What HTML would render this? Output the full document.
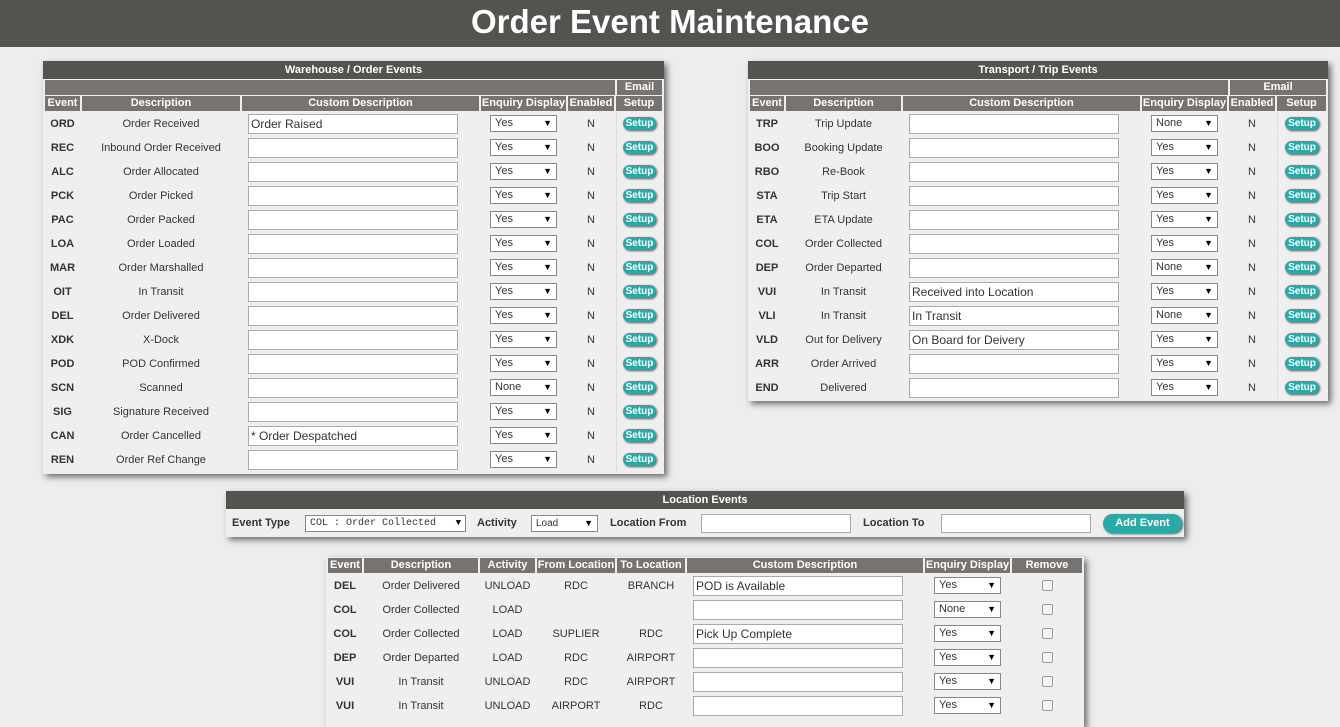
<!DOCTYPE html>
<html><head><meta charset="utf-8"><style>
*{box-sizing:border-box;margin:0;padding:0}
body{width:1340px;height:717px;overflow:hidden;background:#ededed;font-family:"Liberation Sans",Arial,sans-serif;font-size:11px;color:#333;position:relative}
.hdr{position:absolute;left:0;top:0;width:1340px;height:47px;background:#555350;color:#fff;font-weight:bold;font-size:33px;text-align:center;line-height:44px}
.panel{position:absolute;background:#efefef;box-shadow:3px 3px 6px rgba(0,0,0,.55);overflow:hidden}
.ttl{background:#555350;color:#fff;font-weight:bold;text-align:center;height:18px;line-height:18px;font-size:11px}
table{border-collapse:separate;border-spacing:2px 1px;table-layout:fixed;width:100%}
th{background:#767370;color:#fff;font-weight:bold;height:15px;line-height:15px;font-size:11px;padding:0;white-space:nowrap;overflow:hidden}
td{height:23px;text-align:center;padding:0;font-size:11px;color:#333}
td.c{font-weight:bold;color:#333}
td.l{text-align:left;padding-left:6px}
td.s{border-left:1px solid #ddd}
.in{display:inline-block;width:210px;height:20px;border:1px solid #aaa;background:#fff;text-align:left;font-size:12px;line-height:18px;padding-left:2px;vertical-align:middle;color:#333}
.sel{display:inline-block;width:67px;height:17px;border:1px solid #888;background:#fff;text-align:left;font-size:11px;line-height:15px;padding-left:4px;position:relative;vertical-align:middle}
.sel:after{content:"▼";position:absolute;right:4px;top:0;font-size:9px;color:#000}
.btn{display:inline-block;background:#2aa9a6;color:#fff;font-weight:bold;border-radius:8px;box-shadow:1px 1px 2px #555;font-size:10px;height:13px;line-height:13px;padding:0 3px;vertical-align:middle}
.cb{display:inline-block;width:11px;height:11px;border:1px solid #999;border-radius:2px;background:#f4f4f4;vertical-align:middle}
</style></head><body>
<div class="hdr">Order Event Maintenance</div>

<div class="panel" style="left:43px;top:61px;width:621px;height:413px">
<div class="ttl">Warehouse / Order Events</div>
<table>
<colgroup><col style="width:570px"><col></colgroup>
<tr><th></th><th>Email</th></tr>
</table>
<table style="margin-top:-1px">
<colgroup><col style="width:35px"><col style="width:158px"><col style="width:237px"><col style="width:85px"><col style="width:46px"><col></colgroup>
<tr><th>Event</th><th>Description</th><th>Custom Description</th><th>Enquiry Display</th><th>Enabled</th><th>Setup</th></tr>
<tr><td class="c">ORD</td><td>Order Received</td><td class="l"><span class="in">Order Raised</span></td><td><span class="sel">Yes</span></td><td>N</td><td class="s"><span class="btn">Setup</span></td></tr>
<tr><td class="c">REC</td><td>Inbound Order Received</td><td class="l"><span class="in"></span></td><td><span class="sel">Yes</span></td><td>N</td><td class="s"><span class="btn">Setup</span></td></tr>
<tr><td class="c">ALC</td><td>Order Allocated</td><td class="l"><span class="in"></span></td><td><span class="sel">Yes</span></td><td>N</td><td class="s"><span class="btn">Setup</span></td></tr>
<tr><td class="c">PCK</td><td>Order Picked</td><td class="l"><span class="in"></span></td><td><span class="sel">Yes</span></td><td>N</td><td class="s"><span class="btn">Setup</span></td></tr>
<tr><td class="c">PAC</td><td>Order Packed</td><td class="l"><span class="in"></span></td><td><span class="sel">Yes</span></td><td>N</td><td class="s"><span class="btn">Setup</span></td></tr>
<tr><td class="c">LOA</td><td>Order Loaded</td><td class="l"><span class="in"></span></td><td><span class="sel">Yes</span></td><td>N</td><td class="s"><span class="btn">Setup</span></td></tr>
<tr><td class="c">MAR</td><td>Order Marshalled</td><td class="l"><span class="in"></span></td><td><span class="sel">Yes</span></td><td>N</td><td class="s"><span class="btn">Setup</span></td></tr>
<tr><td class="c">OIT</td><td>In Transit</td><td class="l"><span class="in"></span></td><td><span class="sel">Yes</span></td><td>N</td><td class="s"><span class="btn">Setup</span></td></tr>
<tr><td class="c">DEL</td><td>Order Delivered</td><td class="l"><span class="in"></span></td><td><span class="sel">Yes</span></td><td>N</td><td class="s"><span class="btn">Setup</span></td></tr>
<tr><td class="c">XDK</td><td>X-Dock</td><td class="l"><span class="in"></span></td><td><span class="sel">Yes</span></td><td>N</td><td class="s"><span class="btn">Setup</span></td></tr>
<tr><td class="c">POD</td><td>POD Confirmed</td><td class="l"><span class="in"></span></td><td><span class="sel">Yes</span></td><td>N</td><td class="s"><span class="btn">Setup</span></td></tr>
<tr><td class="c">SCN</td><td>Scanned</td><td class="l"><span class="in"></span></td><td><span class="sel">None</span></td><td>N</td><td class="s"><span class="btn">Setup</span></td></tr>
<tr><td class="c">SIG</td><td>Signature Received</td><td class="l"><span class="in"></span></td><td><span class="sel">Yes</span></td><td>N</td><td class="s"><span class="btn">Setup</span></td></tr>
<tr><td class="c">CAN</td><td>Order Cancelled</td><td class="l"><span class="in">* Order Despatched</span></td><td><span class="sel">Yes</span></td><td>N</td><td class="s"><span class="btn">Setup</span></td></tr>
<tr><td class="c">REN</td><td>Order Ref Change</td><td class="l"><span class="in"></span></td><td><span class="sel">Yes</span></td><td>N</td><td class="s"><span class="btn">Setup</span></td></tr>
</table>
</div>

<div class="panel" style="left:748px;top:61px;width:580px;height:340px">
<div class="ttl">Transport / Trip Events</div>
<table>
<colgroup><col style="width:478px"><col></colgroup>
<tr><th></th><th>Email</th></tr>
</table>
<table style="margin-top:-1px">
<colgroup><col style="width:34px"><col style="width:115px"><col style="width:237px"><col style="width:85px"><col style="width:46px"><col></colgroup>
<tr><th>Event</th><th>Description</th><th>Custom Description</th><th>Enquiry Display</th><th>Enabled</th><th>Setup</th></tr>
<tr><td class="c">TRP</td><td>Trip Update</td><td class="l"><span class="in"></span></td><td><span class="sel">None</span></td><td>N</td><td class="s"><span class="btn">Setup</span></td></tr>
<tr><td class="c">BOO</td><td>Booking Update</td><td class="l"><span class="in"></span></td><td><span class="sel">Yes</span></td><td>N</td><td class="s"><span class="btn">Setup</span></td></tr>
<tr><td class="c">RBO</td><td>Re-Book</td><td class="l"><span class="in"></span></td><td><span class="sel">Yes</span></td><td>N</td><td class="s"><span class="btn">Setup</span></td></tr>
<tr><td class="c">STA</td><td>Trip Start</td><td class="l"><span class="in"></span></td><td><span class="sel">Yes</span></td><td>N</td><td class="s"><span class="btn">Setup</span></td></tr>
<tr><td class="c">ETA</td><td>ETA Update</td><td class="l"><span class="in"></span></td><td><span class="sel">Yes</span></td><td>N</td><td class="s"><span class="btn">Setup</span></td></tr>
<tr><td class="c">COL</td><td>Order Collected</td><td class="l"><span class="in"></span></td><td><span class="sel">Yes</span></td><td>N</td><td class="s"><span class="btn">Setup</span></td></tr>
<tr><td class="c">DEP</td><td>Order Departed</td><td class="l"><span class="in"></span></td><td><span class="sel">None</span></td><td>N</td><td class="s"><span class="btn">Setup</span></td></tr>
<tr><td class="c">VUI</td><td>In Transit</td><td class="l"><span class="in">Received into Location</span></td><td><span class="sel">Yes</span></td><td>N</td><td class="s"><span class="btn">Setup</span></td></tr>
<tr><td class="c">VLI</td><td>In Transit</td><td class="l"><span class="in">In Transit</span></td><td><span class="sel">None</span></td><td>N</td><td class="s"><span class="btn">Setup</span></td></tr>
<tr><td class="c">VLD</td><td>Out for Delivery</td><td class="l"><span class="in">On Board for Deivery</span></td><td><span class="sel">Yes</span></td><td>N</td><td class="s"><span class="btn">Setup</span></td></tr>
<tr><td class="c">ARR</td><td>Order Arrived</td><td class="l"><span class="in"></span></td><td><span class="sel">Yes</span></td><td>N</td><td class="s"><span class="btn">Setup</span></td></tr>
<tr><td class="c">END</td><td>Delivered</td><td class="l"><span class="in"></span></td><td><span class="sel">Yes</span></td><td>N</td><td class="s"><span class="btn">Setup</span></td></tr>
</table>
</div>

<div class="panel" style="left:226px;top:491px;width:958px;height:46px">
<div class="ttl">Location Events</div>
<div style="position:relative;height:28px;font-weight:bold;font-size:11px">
<span style="position:absolute;left:6px;top:8px">Event Type</span>
<span class="sel" style="position:absolute;left:79px;top:6px;width:161px;font-family:'Liberation Mono',monospace;font-weight:normal;font-size:10px">COL : Order Collected</span>
<span style="position:absolute;left:251px;top:8px">Activity</span>
<span class="sel" style="position:absolute;left:305px;top:6px;width:67px;font-weight:normal;font-size:10px">Load</span>
<span style="position:absolute;left:384px;top:8px">Location From</span>
<span class="in" style="position:absolute;left:475px;top:5px;width:150px;height:19px"></span>
<span style="position:absolute;left:637px;top:8px">Location To</span>
<span class="in" style="position:absolute;left:715px;top:5px;width:150px;height:19px"></span>
<span class="btn" style="position:absolute;left:877px;top:5px;width:79px;height:19px;line-height:19px;font-size:11px;border-radius:10px;text-align:center">Add Event</span>
</div>
</div>

<div class="panel" style="left:326px;top:557px;width:758px;height:170px">
<table>
<colgroup><col style="width:34px"><col style="width:114px"><col style="width:55px"><col style="width:78px"><col style="width:68px"><col style="width:236px"><col style="width:85px"><col></colgroup>
<tr><th>Event</th><th>Description</th><th>Activity</th><th>From Location</th><th>To Location</th><th>Custom Description</th><th>Enquiry Display</th><th>Remove</th></tr>
<tr><td class="c">DEL</td><td>Order Delivered</td><td>UNLOAD</td><td>RDC</td><td>BRANCH</td><td class="l"><span class="in">POD is Available</span></td><td><span class="sel">Yes</span></td><td><span class="cb"></span></td></tr>
<tr><td class="c">COL</td><td>Order Collected</td><td>LOAD</td><td></td><td></td><td class="l"><span class="in"></span></td><td><span class="sel">None</span></td><td><span class="cb"></span></td></tr>
<tr><td class="c">COL</td><td>Order Collected</td><td>LOAD</td><td>SUPLIER</td><td>RDC</td><td class="l"><span class="in">Pick Up Complete</span></td><td><span class="sel">Yes</span></td><td><span class="cb"></span></td></tr>
<tr><td class="c">DEP</td><td>Order Departed</td><td>LOAD</td><td>RDC</td><td>AIRPORT</td><td class="l"><span class="in"></span></td><td><span class="sel">Yes</span></td><td><span class="cb"></span></td></tr>
<tr><td class="c">VUI</td><td>In Transit</td><td>UNLOAD</td><td>RDC</td><td>AIRPORT</td><td class="l"><span class="in"></span></td><td><span class="sel">Yes</span></td><td><span class="cb"></span></td></tr>
<tr><td class="c">VUI</td><td>In Transit</td><td>UNLOAD</td><td>AIRPORT</td><td>RDC</td><td class="l"><span class="in"></span></td><td><span class="sel">Yes</span></td><td><span class="cb"></span></td></tr>
</table>
</div>
</body></html>
